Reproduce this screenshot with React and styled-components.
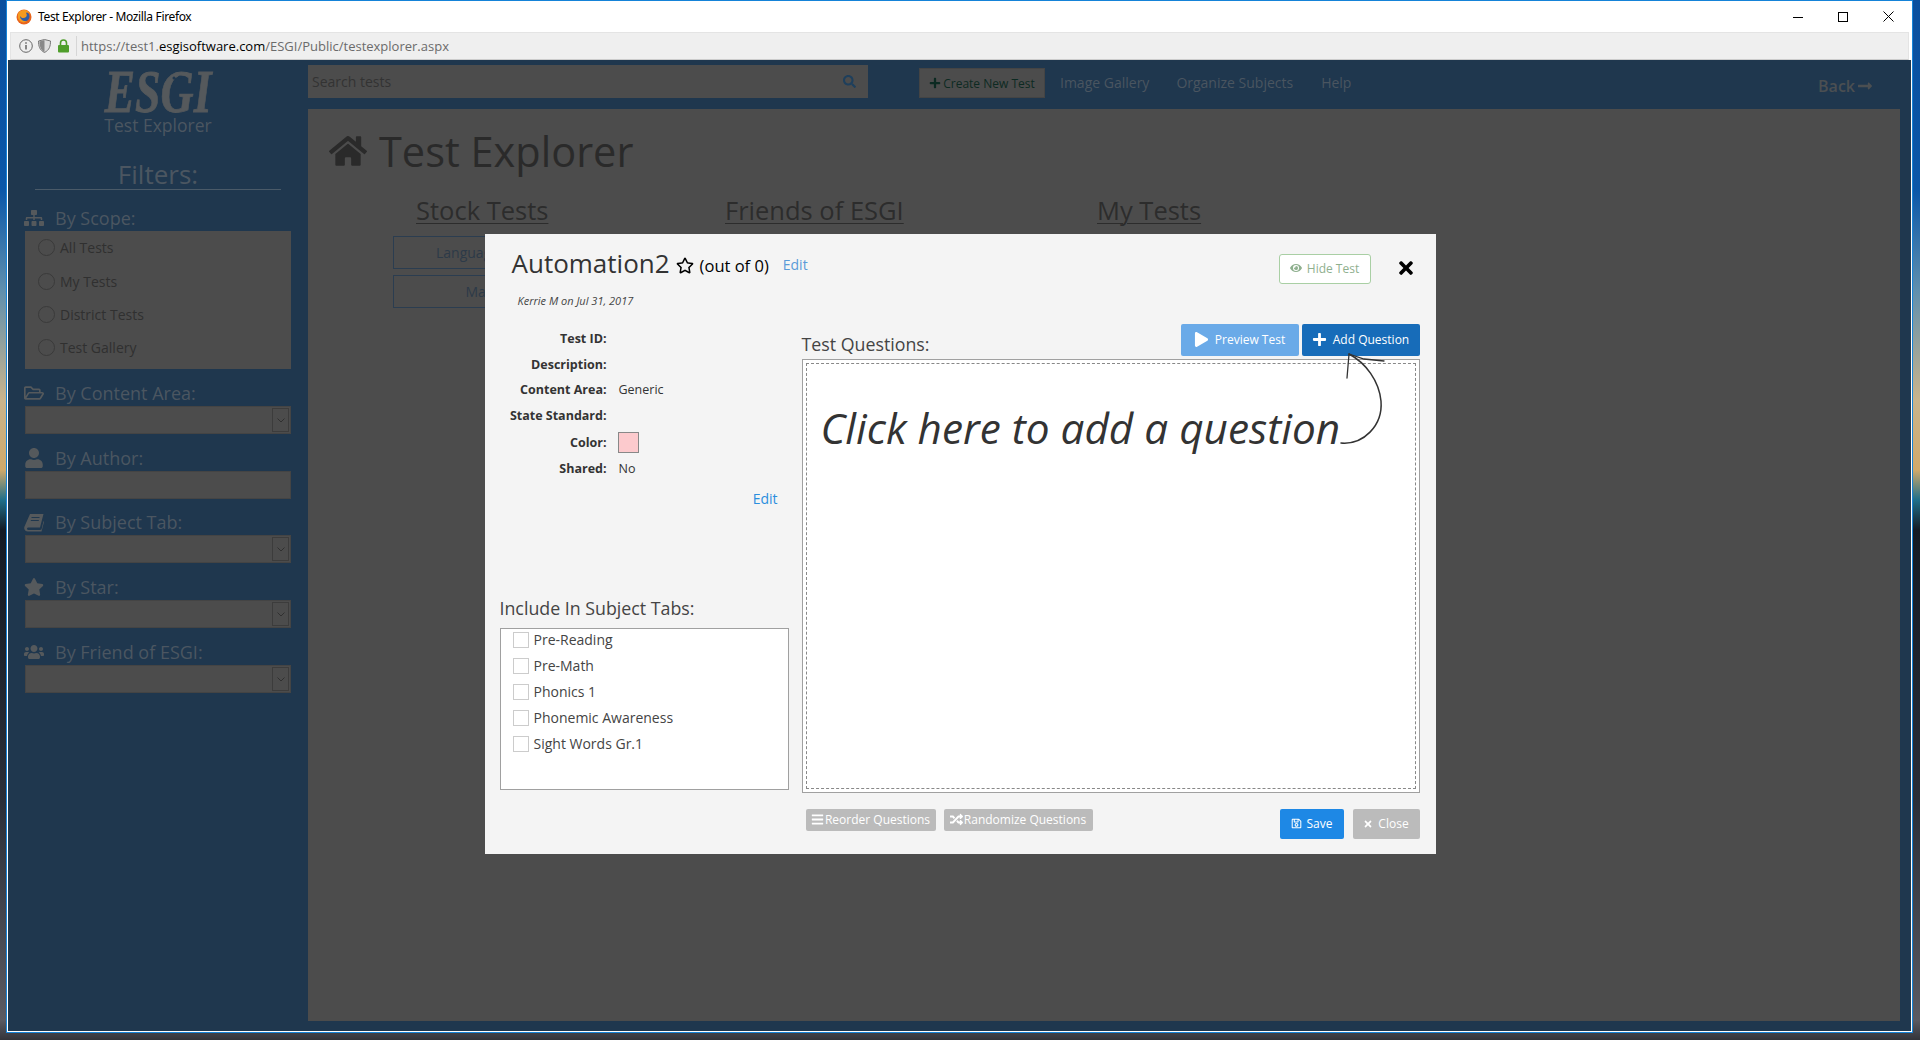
import React from "react";
import styled, { createGlobalStyle } from "styled-components";
import {
  FaHome,
  FaSitemap,
  FaRegFolderOpen,
  FaUser,
  FaStar,
  FaUsers,
  FaSearch,
  FaPlus,
  FaRegStar,
  FaEye,
  FaPlay,
  FaBars,
  FaRandom,
  FaRegSave,
  FaTimes,
  FaLongArrowAltRight,
} from "react-icons/fa";

const GlobalStyle = createGlobalStyle`
  html, body {
    margin: 0;
    padding: 0;
    background: #222;
  }
  * {
    box-sizing: border-box;
  }
`;

const Desktop = styled.div`
  position: relative;
  width: 1920px;
  height: 1040px;
  overflow: hidden;
  padding: 0 7px 7px 6px;
  font-family: "Open Sans", "Noto Sans", sans-serif;
  background: linear-gradient(
    180deg,
    #0a4f9e 0,
    #0b57a8 190px,
    #5f8fae 290px,
    #c9b48c 400px,
    #d0a96a 470px,
    #1f6f8a 500px,
    #141a24 530px,
    #2a2e38 800px,
    #5a5a62 1020px,
    #33343a 1040px
  );
`;

const BrowserWindow = styled.div`
  width: 100%;
  height: 100%;
  display: flex;
  flex-direction: column;
  border: 1px solid #1583d8;
  outline: 1px solid #fff;
  outline-offset: -2px;
  background: #fff;
`;

////browser chrome
const TitleBar = styled.div`
  height: 31px;
  flex: none;
  display: flex;
  align-items: center;
  padding-left: 9px;
  background: #fff;
  font-size: 12px;
  color: #000;
`;

const TitleText = styled.span`
  margin: -1px 0 0 6px;
  font-family: "Noto Sans", sans-serif;
  letter-spacing: -0.35px;
`;

const WindowControls = styled.div`
  margin-left: auto;
  display: flex;
  align-items: center;
  padding-right: 18px;
  gap: 35px;
`;

const UrlBar = styled.div`
  height: 28px;
  flex: none;
  display: flex;
  align-items: center;
  margin: 0 3px;
  padding-left: 8px;
  background: #efefef;
  border: 1px solid #e4e4e4;
  border-bottom: 1px solid #ccc;
  font-size: 13px;
  color: #6b6b6b;
`;

const UrlIcons = styled.div`
  display: flex;
  align-items: center;
  gap: 5px;
  padding-right: 7px;
  margin-right: 4px;
  height: 20px;
  border-right: 1px solid #d6d6d6;
`;

const UrlHost = styled.span`
  color: #000;
`;

////dimmed page
const Page = styled.div`
  flex: 1;
  display: flex;
  margin: 0 1px 1px;
  background: #1f374e;
  min-height: 0;
`;

const Sidebar = styled.aside`
  width: 300px;
  flex: none;
  padding: 8px 17px 0;
`;

const LogoMark = styled.svg`
  display: block;
  width: 116px;
  height: 45px;
  margin: 0 auto;
  overflow: visible;
`;

const LogoCaption = styled.div`
  height: 24px;
  line-height: 24px;
  text-align: center;
  font-size: 17.5px;
  color: #4b5661;
`;

const FiltersTitle = styled.div`
  margin: 23px 10px 4px;
  height: 30px;
  line-height: 28px;
  text-align: center;
  font-size: 26px;
  color: #4b5661;
  border-bottom: 1px solid #4a5a68;
`;

const FilterLabel = styled.div`
  height: ${(p) => (p.$tight ? 36 : 37)}px;
  padding-top: ${(p) => (p.$tight ? 10 : 11)}px;
  display: flex;
  align-items: center;
  font-size: 18px;
  line-height: 26px;
  color: #4b5661;

  svg {
    width: 20px;
    height: 20px;
    margin-left: -1px;
    margin-right: 11px;
    color: #55595c;
    flex: none;
  }
`;

const ScopeBox = styled.div`
  height: 138px;
  background: #4c4c4c;
  padding-left: 13px;
`;

const ScopeRow = styled.div`
  height: 33.4px;
  display: flex;
  align-items: center;
  gap: 5px;
  font-size: 14px;
  color: #303030;
`;

const Radio = styled.span`
  width: 17px;
  height: 17px;
  border-radius: 50%;
  border: 1px solid #3a3a3a;
`;

const Field = styled.div`
  height: 28px;
  display: flex;
  justify-content: flex-end;
  padding: 1px;
  background: #4c4c4c;
  border: 1px solid #444;
`;

const SelectArrow = styled.span`
  width: 17px;
  display: flex;
  align-items: center;
  justify-content: center;
  border: 1px solid #3c3c3c;
  color: #303030;
`;

const MainColumn = styled.div`
  flex: 1;
  display: flex;
  flex-direction: column;
  min-width: 0;
`;

const TopNav = styled.div`
  height: 49px;
  flex: none;
  display: flex;
  padding-top: 5px;
`;

const SearchBox = styled.div`
  width: 560px;
  height: 33px;
  display: flex;
  align-items: center;
  justify-content: space-between;
  padding: 0 12px 0 4px;
  background: #4c4c4c;
  font-size: 14px;
  color: #333;

  svg {
    color: #1e3f5c;
    width: 13px;
    height: 13px;
  }
`;

const CreateButton = styled.div`
  margin: 3px 0 0 51px;
  width: 126px;
  height: 30px;
  display: flex;
  align-items: center;
  justify-content: center;
  gap: 2px;
  background: #4c4c4c;
  border: 1px solid #444;
  font-size: 12px;
  color: #0c2a22;

  svg {
    width: 12px;
    height: 12px;
  }
`;

const NavLink = styled.span`
  margin: 8px 0 0 ${(p) => p.$gap}px;
  font-size: 14px;
  line-height: 20px;
  color: #4a5560;
`;

const BackLink = styled.span`
  margin: 9px 0 0 auto;
  padding-right: 38px;
  display: flex;
  align-items: center;
  gap: 2px;
  height: 24px;
  font-size: 16px;
  font-weight: 600;
  color: #4b4f52;
`;

const MainPanel = styled.main`
  height: 912px;
  margin-right: 11px;
  padding: 14px 0 0 21px;
  background: #4c4c4c;
`;

const PageTitle = styled.h1`
  margin: 0;
  display: flex;
  align-items: center;
  gap: 12px;
  height: 56px;
  font-size: 41.5px;
  font-weight: 400;
  color: #2a2a2a;

  svg {
    width: 38px;
    height: 38px;
  }
`;

const Tabs = styled.div`
  display: flex;
  margin-top: 13px;
  padding-left: 87px;
  height: 36px;
`;

const TabTitle = styled.span`
  width: ${(p) => p.$width}px;
  font-size: 25.5px;
  line-height: 36px;
  color: #2c2c2c;
  text-decoration: underline;
  text-decoration-thickness: 1px;
  text-underline-offset: 3px;
`;

const SubjectList = styled.div`
  margin: 8px 0 0 64px;
  width: 176px;
  display: flex;
  flex-direction: column;
  gap: 6px;
`;

const SubjectItem = styled.div`
  height: 33px;
  line-height: 31px;
  padding-left: 3px;
  text-align: center;
  font-size: 14px;
  color: #2d3a48;
  border: 1px solid #2b3d50;
`;

////modal
const ModalLayer = styled.div`
  position: absolute;
  inset: 0;
  display: flex;
  justify-content: center;
  padding-top: 234px;
`;

const Modal = styled.div`
  width: 951px;
  height: 620px;
  padding: 0 16px 0 15px;
  background: #f4f4f4;
  color: #333;
`;

const ModalHeader = styled.div`
  height: 90px;
  display: flex;
  padding: 13px 0 0 12px;
`;

const HeadingBlock = styled.div`
  display: flex;
  flex-direction: column;
`;

const HeadingRow = styled.div`
  display: flex;
  align-items: center;
  height: 32px;
`;

const TestName = styled.span`
  font-size: 26px;
  color: #333;
`;

const RatingText = styled.span`
  margin-left: 6px;
  font-size: 16.5px;
  color: #000;
  padding-top: 4px;
`;

const StarIcon = styled(FaRegStar)`
  margin: 4px 0 0 6px;
  width: 18px;
  height: 17px;
  color: #000;
`;

const HeadingEdit = styled.span`
  margin-left: 14px;
  padding-top: 2px;
  font-size: 14px;
  color: #5a9bd8;
`;

const Byline = styled.div`
  margin: 15px 0 0 6px;
  font-size: 11px;
  line-height: 14px;
  font-style: italic;
  color: #444;
`;

const HideButton = styled.div`
  margin: 7px 0 0 auto;
  width: 92px;
  height: 30px;
  display: flex;
  align-items: center;
  justify-content: center;
  gap: 5px;
  padding-bottom: 2px;
  background: #fff;
  border: 1px solid #a9cfa4;
  border-radius: 3px;
  font-size: 12px;
  color: #8fb08f;
`;

const CloseIcon = styled.div`
  margin: 11px 6px 0 27px;
  width: 16px;
  height: 20px;
  display: flex;
  align-items: center;
  justify-content: center;
  color: #000;
`;

const ModalBody = styled.div`
  display: flex;
  gap: 13px;
`;

const DetailsColumn = styled.div`
  width: 289px;
  flex: none;
  padding-top: 2px;
`;

const DetailRow = styled.div`
  display: flex;
  align-items: center;
  gap: 12px;
  min-height: ${(p) => (p.$tall ? 28 : 25.5)}px;
  font-size: 12.5px;
`;

const DetailLabel = styled.span`
  width: 107px;
  flex: none;
  text-align: right;
  font-weight: 700;
  white-space: nowrap;
  color: #333;
`;

const Swatch = styled.span`
  width: 21px;
  height: 21px;
  margin-left: -1px;
  background: #fccacd;
  border: 1px solid #888;
`;

const DetailsEdit = styled.div`
  margin-top: 7px;
  padding-right: 11px;
  text-align: right;
  font-size: 14px;
  line-height: 20px;
  color: #2b8ede;
`;

const SectionTitle = styled.div`
  font-size: 17.8px;
  line-height: 24px;
  color: #444;
`;

const IncludeBlock = styled.div`
  margin-top: 87px;
`;

const TabsBox = styled.div`
  margin-top: 8px;
  height: 162px;
  padding: 0 12px;
  background: #fff;
  border: 1px solid #a0a0a0;
`;

const TabRow = styled.div`
  height: 22px;
  margin-bottom: 4px;
  display: flex;
  align-items: center;
  gap: 5px;
  font-size: 14px;
  color: #444;
`;

const Checkbox = styled.span`
  width: 16px;
  height: 16px;
  background: #fff;
  border: 1px solid #ccc;
`;

const QuestionsColumn = styled.div`
  width: 618px;
  flex: none;
`;

const QuestionsHead = styled.div`
  height: 35px;
  display: flex;
  gap: 3px;
`;

const QuestionsTitle = styled(SectionTitle)`
  margin: 8px auto 0 0;
`;

const ActionButton = styled.div`
  width: 118px;
  height: 32px;
  display: flex;
  align-items: center;
  justify-content: center;
  gap: 6px;
  padding-bottom: 2px;
  border-radius: 2px;
  background: ${(p) => p.$bg};
  color: #fff;
  font-size: 12px;
`;

const QuestionBox = styled.div`
  position: relative;
  height: 434px;
  padding: 3px;
  background: #fff;
  border: 1px solid #a0a0a0;
`;

const DashedArea = styled.div`
  height: 100%;
  padding: 37px 0 0 14px;
  border: 1px dashed #888;
  font-size: 42.3px;
  font-style: italic;
  line-height: 54px;
  color: #333;
`;

const CurlyArrow = styled.svg`
  position: absolute;
  left: 535px;
  top: -10px;
  width: 52px;
  height: 100px;
`;

const QuestionsFooter = styled.div`
  display: flex;
  align-items: flex-start;
  margin-top: 16px;
  padding-left: 4px;
`;

const ToolButton = styled.div`
  width: ${(p) => p.$width}px;
  height: 22px;
  margin-right: 8px;
  padding-bottom: 1px;
  display: flex;
  align-items: center;
  justify-content: center;
  gap: 1px;
  border-radius: 2px;
  background: #bbb;
  color: #fff;
  font-size: 12px;
  white-space: nowrap;
`;

const FooterButton = styled.div`
  margin-left: ${(p) => p.$ml || 0}px;
  width: ${(p) => p.$width}px;
  height: 30px;
  display: flex;
  align-items: center;
  justify-content: center;
  gap: 5px;
  padding-bottom: 1px;
  border-radius: 2px;
  background: ${(p) => p.$bg};
  color: #fff;
  font-size: 12px;
`;

const FirefoxLogo = () => (
  <svg width="16" height="16" viewBox="0 0 16 16">
    <circle cx="8" cy="8" r="7.5" fill="#e8641c" />
    <circle cx="8.5" cy="7.5" r="5" fill="#2f5da6" />
    <path d="M2 5c1-3 4-4 6-4 3 0 6 2 7 5-1-2-3-3-5-2 1 1 1 3 0 4-2 2-5 1-6-1 0 3 3 6 7 5-3 3-8 1-9-3z" fill="#f59a1f" />
  </svg>
);

const SiteIcons = () => (
  <UrlIcons>
    <svg width="14" height="14" viewBox="0 0 14 14" fill="none" stroke="#666">
      <circle cx="7" cy="7" r="6.3" />
      <path d="M7 6v4.500M7 3.200v1.600" strokeWidth="1.500" />
    </svg>
    <svg width="13" height="14" viewBox="0 0 13 14">
      <path d="M6.500.5 12.500 2c0 5-1 9-6 11.500C1.500 11 .5 7 .5 2z" fill="#ddd" stroke="#777" />
      <path d="M6.500 1v12C2.500 11 1.500 7 1.500 2.500z" fill="#888" />
    </svg>
    <svg width="11" height="14" viewBox="0 0 11 14" style={{ marginLeft: 2 }}>
      <path d="M2.500 6V4a3 3 0 0 1 6 0v2" fill="none" stroke="#4f9e2b" strokeWidth="1.600" />
      <rect x="0" y="6" width="11" height="7.500" rx="1" fill="#4f9e2b" />
    </svg>
  </UrlIcons>
);

const Chevron = () => (
  <svg width="8" height="5" viewBox="0 0 8 5" fill="none" stroke="currentColor">
    <path d="M.5.5 4 4 7.500.5" />
  </svg>
);

////font awesome 4 style slanted book, the package one stands upright
const SlantedBook = () => (
  <svg viewBox="0 0 20 20" fill="currentColor">
    <path d="M6 2h13.500L16 15.500H4.500c-2 0-2 2.500 0 2.500H16l1.500-.5 2-8.500.5 1-2.500 9.500H4c-3 0-4.500-2.500-3.500-5z" />
    <path d="M7.500 5.500h8M6.800 8.500h8" stroke="#1f374e" strokeWidth="1" />
  </svg>
);

const SelectField = () => (
  <Field>
    <SelectArrow>
      <Chevron />
    </SelectArrow>
  </Field>
);

const scopes = ["All Tests", "My Tests", "District Tests", "Test Gallery"];
const subjectTabs = ["Pre-Reading", "Pre-Math", "Phonics 1", "Phonemic Awareness", "Sight Words Gr.1"];

const App = () => {
  return (
    <Desktop>
      <GlobalStyle />
      <BrowserWindow>
        <TitleBar>
          <FirefoxLogo />
          <TitleText>Test Explorer - Mozilla Firefox</TitleText>
          <WindowControls>
            <svg width="10" height="10" viewBox="0 0 10 10" stroke="#000" fill="none">
              <path d="M0 5.500h10" />
            </svg>
            <svg width="10" height="10" viewBox="0 0 10 10" stroke="#000" fill="none">
              <rect x=".5" y=".5" width="9" height="9" />
            </svg>
            <svg width="11" height="11" viewBox="0 0 11 11" stroke="#000" fill="none">
              <path d="M.5.5l10 10M10.500.5l-10 10" />
            </svg>
          </WindowControls>
        </TitleBar>
        <UrlBar>
          <SiteIcons />
          https://test1.<UrlHost>esgisoftware.com</UrlHost>/ESGI/Public/testexplorer.aspx
        </UrlBar>

        <Page>
          <Sidebar>
            <LogoMark viewBox="0 0 116 45">
              <g transform="translate(58 44) scale(.74 1)">
                <text
                  x="0"
                  y="0"
                  textAnchor="middle"
                  fontFamily="Liberation Serif, serif"
                  fontWeight="700"
                  fontStyle="italic"
                  fontSize="62"
                  fill="#55595c"
                  stroke="#55595c"
                  strokeWidth=".8"
                >
                  ESGI
                </text>
              </g>
              <circle cx="52" cy="16" r="3" fill="none" stroke="#1f374e" />
              <circle cx="74" cy="10" r="1.500" fill="#1f374e" />
              <circle cx="80" cy="9" r="1.500" fill="#1f374e" />
            </LogoMark>
            <LogoCaption>Test Explorer</LogoCaption>
            <FiltersTitle>Filters:</FiltersTitle>

            <FilterLabel>
              <FaSitemap />
              By Scope:
            </FilterLabel>
            <ScopeBox>
              {scopes.map((s) => (
                <ScopeRow key={s}>
                  <Radio />
                  {s}
                </ScopeRow>
              ))}
            </ScopeBox>

            <FilterLabel>
              <FaRegFolderOpen />
              By Content Area:
            </FilterLabel>
            <SelectField />

            <FilterLabel>
              <FaUser />
              By Author:
            </FilterLabel>
            <Field />

            <FilterLabel $tight>
              <SlantedBook />
              By Subject Tab:
            </FilterLabel>
            <SelectField />

            <FilterLabel>
              <FaStar />
              By Star:
            </FilterLabel>
            <SelectField />

            <FilterLabel>
              <FaUsers />
              By Friend of ESGI:
            </FilterLabel>
            <SelectField />
          </Sidebar>

          <MainColumn>
            <TopNav>
              <SearchBox>
                Search tests
                <FaSearch />
              </SearchBox>
              <CreateButton>
                <FaPlus />
                Create New Test
              </CreateButton>
              <NavLink $gap={15}>Image Gallery</NavLink>
              <NavLink $gap={27}>Organize Subjects</NavLink>
              <NavLink $gap={28}>Help</NavLink>
              <BackLink>
                Back
                <FaLongArrowAltRight />
              </BackLink>
            </TopNav>
            <MainPanel>
              <PageTitle>
                <FaHome />
                Test Explorer
              </PageTitle>
              <Tabs>
                <TabTitle $width={309}>Stock Tests</TabTitle>
                <TabTitle $width={372}>Friends of ESGI</TabTitle>
                <TabTitle $width={110}>My Tests</TabTitle>
              </Tabs>
              <SubjectList>
                <SubjectItem>Language Arts</SubjectItem>
                <SubjectItem>Math</SubjectItem>
              </SubjectList>
            </MainPanel>
          </MainColumn>
        </Page>
      </BrowserWindow>

      <ModalLayer>
        <Modal>
          <ModalHeader>
            <HeadingBlock>
              <HeadingRow>
                <TestName>Automation2</TestName>
                <StarIcon />
                <RatingText>(out of 0)</RatingText>
                <HeadingEdit>Edit</HeadingEdit>
              </HeadingRow>
              <Byline>Kerrie M on Jul 31, 2017</Byline>
            </HeadingBlock>
            <HideButton>
              <FaEye size={12} />
              Hide Test
            </HideButton>
            <CloseIcon>
              <FaTimes size={20} />
            </CloseIcon>
          </ModalHeader>

          <ModalBody>
            <DetailsColumn>
              <DetailRow>
                <DetailLabel>Test ID:</DetailLabel>
              </DetailRow>
              <DetailRow>
                <DetailLabel>Description:</DetailLabel>
              </DetailRow>
              <DetailRow>
                <DetailLabel>Content Area:</DetailLabel>
                Generic
              </DetailRow>
              <DetailRow>
                <DetailLabel>State Standard:</DetailLabel>
              </DetailRow>
              <DetailRow $tall>
                <DetailLabel>Color:</DetailLabel>
                <Swatch />
              </DetailRow>
              <DetailRow>
                <DetailLabel>Shared:</DetailLabel>
                No
              </DetailRow>
              <DetailsEdit>Edit</DetailsEdit>

              <IncludeBlock>
                <SectionTitle>Include In Subject Tabs:</SectionTitle>
                <TabsBox>
                  {subjectTabs.map((t) => (
                    <TabRow key={t}>
                      <Checkbox />
                      {t}
                    </TabRow>
                  ))}
                </TabsBox>
              </IncludeBlock>
            </DetailsColumn>

            <QuestionsColumn>
              <QuestionsHead>
                <QuestionsTitle>Test Questions:</QuestionsTitle>
                <ActionButton $bg="#6aaae8">
                  <FaPlay size={15} />
                  Preview Test
                </ActionButton>
                <ActionButton $bg="#176cb9">
                  <FaPlus size={15} />
                  Add Question
                </ActionButton>
              </QuestionsHead>
              <QuestionBox>
                <DashedArea>Click here to add a question</DashedArea>
                <CurlyArrow viewBox="0 0 52 100" fill="none" stroke="#333" strokeLinecap="round">
                  <path d="M3 93C25 95 45 76 43 51 41 31 28 13 11 4" strokeWidth="1.500" />
                  <path d="M11 4 9 28M11 4 26 9 46 11" strokeWidth="1.300" />
                </CurlyArrow>
              </QuestionBox>
              <QuestionsFooter>
                <ToolButton $width={130}>
                  <FaBars size={13} />
                  Reorder Questions
                </ToolButton>
                <ToolButton $width={149}>
                  <FaRandom size={13} />
                  Randomize Questions
                </ToolButton>
                <FooterButton $bg="#1e88e5" $width={64} $ml={179}>
                  <FaRegSave size={11} />
                  Save
                </FooterButton>
                <FooterButton $bg="#bbb" $width={67} $ml={9}>
                  <FaTimes size={10} />
                  Close
                </FooterButton>
              </QuestionsFooter>
            </QuestionsColumn>
          </ModalBody>
        </Modal>
      </ModalLayer>
    </Desktop>
  );
};

export default App;
